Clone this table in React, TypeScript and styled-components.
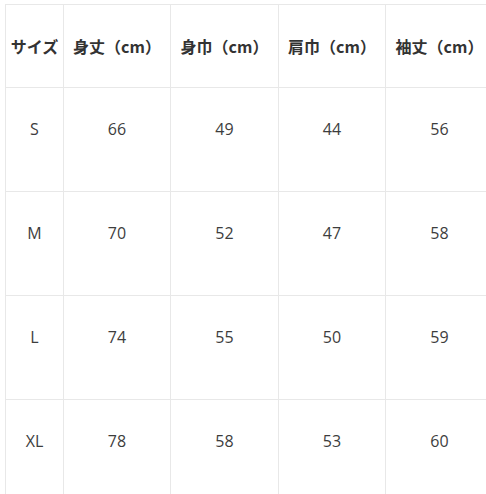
import React from "react";
import styled, { createGlobalStyle } from "styled-components";

const Global = createGlobalStyle`
  html, body {
    margin: 0;
    padding: 0;
    background: #ffffff;
    overflow: hidden;
  }
  body {
    font-family: "Open Sans", "Noto Sans CJK JP", sans-serif;
  }
`;

const Wrap = styled.div`
  padding: 4px 0 0 5px;
  width: 481px;
  height: 490px;
  overflow: hidden;
`;

const Table = styled.table`
  border-collapse: collapse;
  table-layout: fixed;
  width: 488px;
  color: #333333;
`;

const HeadCell = styled.th`
  border: 1px solid #e8e8e8;
  padding: 29px 0;
  line-height: 24px;
  font-size: 16px;
  font-weight: 700;
  text-align: center;
  vertical-align: middle;
  white-space: nowrap;
  font-family: "Noto Sans CJK JP", "Open Sans", sans-serif;
`;

const Cell = styled.td`
  border: 1px solid #e8e8e8;
  padding: 29px 0 50px;
  line-height: 24px;
  font-size: 16px;
  font-weight: 400;
  text-align: center;
  vertical-align: middle;
  color: #3d3d3d;
`;

const headers = ["サイズ", "身丈（cm）", "身巾（cm）", "肩巾（cm）", "袖丈（cm）"];
const widths = [58, 107, 108, 107, 108];
const rows = [
  ["S", "66", "49", "44", "56"],
  ["M", "70", "52", "47", "58"],
  ["L", "74", "55", "50", "59"],
  ["XL", "78", "58", "53", "60"],
];

export default function App() {
  return (
    <>
      <Global />
      <Wrap>
        <Table>
          <colgroup>
            {widths.map((w, i) => (
              <col key={i} style={{ width: w }} />
            ))}
          </colgroup>
          <thead>
            <tr>
              {headers.map((h) => (
                <HeadCell key={h}>{h}</HeadCell>
              ))}
            </tr>
          </thead>
          <tbody>
            {rows.map((r) => (
              <tr key={r[0]}>
                {r.map((c, i) => (
                  <Cell key={i}>{c}</Cell>
                ))}
              </tr>
            ))}
          </tbody>
        </Table>
      </Wrap>
    </>
  );
}
